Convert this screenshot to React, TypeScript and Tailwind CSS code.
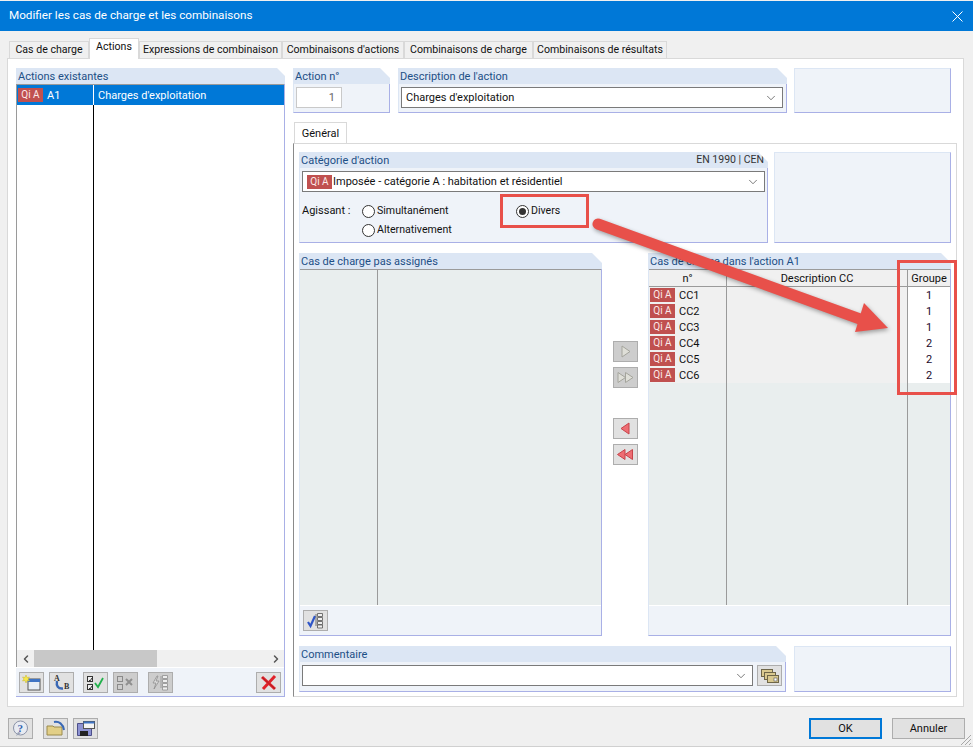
import { ChevronDown, ChevronLeft, ChevronRight } from "lucide-react";
import type { ReactNode } from "react";

const TABS = [
  { label: "Cas de charge", width: "w-[80px]" },
  { label: "Actions", width: "w-[50px]", active: true },
  { label: "Expressions de combinaison", width: "w-[143px]" },
  { label: "Combinaisons d'actions", width: "w-[122px]" },
  { label: "Combinaisons de charge", width: "w-[129px]" },
  { label: "Combinaisons de résultats", width: "w-[134px]" },
];

const ROWS = [
  { name: "CC1", group: 1 },
  { name: "CC2", group: 1 },
  { name: "CC3", group: 1 },
  { name: "CC4", group: 2 },
  { name: "CC5", group: 2 },
  { name: "CC6", group: 2 },
];

function Badge() {
  return (
    <span className="inline-flex h-[14px] w-[25px] shrink-0 items-center justify-center bg-[#c0504f] text-[10px] leading-none text-[#fbe9e9]">
      Qi A
    </span>
  );
}

function Group({
  title,
  right,
  className,
  children,
}: {
  title: string;
  right?: string;
  className: string;
  children?: ReactNode;
}) {
  return (
    <div className={`flex flex-col ${className}`}>
      <div className="flex h-[16px] shrink-0 items-center justify-between bg-[#dce6f4] px-[2px] text-[#1d4f86] [clip-path:polygon(0_0,calc(100%-10px)_0,100%_10px,100%_100%,0_100%)]">
        <span>{title}</span>
        {right && <span className="pr-[2px] text-[10.5px] text-[#333]">{right}</span>}
      </div>
      <div className="flex min-h-0 flex-1 flex-col border-r border-b border-l border-r-[#a9b0e6] border-b-[#a9b0e6] border-l-[#dce6f4] bg-[#eff3f9]">
        {children}
      </div>
    </div>
  );
}

function EmptyBox({ className }: { className: string }) {
  return (
    <div className={`border border-t-[#dce6f4] border-r-[#a9b0e6] border-b-[#a9b0e6] border-l-[#dce6f4] bg-[#eff3f9] ${className}`} />
  );
}

function ToolButton({ children, off, className = "" }: { children: ReactNode; off?: boolean; className?: string }) {
  return (
    <div
      className={`flex h-[21px] w-[25px] shrink-0 items-center justify-center border border-[#adadad] ${off ? "bg-[#cdcdcd]" : "bg-[#e1e1e1]"} ${className}`}
    >
      {children}
    </div>
  );
}

function Select({ className, children }: { className: string; children?: ReactNode }) {
  return (
    <div className={`flex h-[21px] items-center border border-[#7a7a7a] bg-white ${className}`}>
      <div className="flex min-w-0 flex-1 items-center pl-[4px]">{children}</div>
      <ChevronDown size={14} strokeWidth={1.2} className="mr-[4px] text-[#444]" />
    </div>
  );
}

function Radio({ label, checked }: { label: string; checked?: boolean }) {
  return (
    <div className="flex h-[14px] items-center gap-[2px] text-[10.6px]">
      <span className="flex h-[13px] w-[13px] items-center justify-center rounded-full border border-[#333] bg-white">
        {checked && <span className="h-[7px] w-[7px] rounded-full bg-[#333]" />}
      </span>
      <span>{label}</span>
    </div>
  );
}

function Svg({ children }: { children: ReactNode }) {
  return (
    <svg width="21" height="17" viewBox="0 0 21 17" fill="none">
      {children}
    </svg>
  );
}

function TriangleButtons({ dir, double, off }: { dir: "r" | "l"; double?: boolean; off?: boolean }) {
  const fill = off ? "#dfdfd8" : "#ee6d73";
  const stroke = off ? "#a4a49c" : "#c8444a";
  const points =
    dir === "r"
      ? double
        ? ["3,3.500 10.500,8.500 3,13.500", "10.500,3.500 18,8.500 10.500,13.500"]
        : ["7,3 15,8.500 7,14"]
      : double
        ? ["10,3.500 2.500,8.500 10,13.500", "17.500,3.500 10,8.500 17.500,13.500"]
        : ["14,3 6,8.500 14,14"];
  return (
    <ToolButton off={off}>
      <Svg>
        {points.map((p) => (
          <polygon key={p} points={p} fill={fill} stroke={stroke} />
        ))}
      </Svg>
    </ToolButton>
  );
}

function NewIcon() {
  return (
    <Svg>
      <rect x="7" y="5" width="12" height="11" fill="#e8eef6" stroke="#555" />
      <rect x="7" y="5" width="12" height="3" fill="#3f74c4" />
      <path d="M5 1l1 2.5 2.5-.5-1.5 2 1.5 2-2.5-.5-1 2.5-1-2.5-2.5.5 1.5-2-1.5-2 2.5.5z" fill="#f6e84a" stroke="#c9b52a" strokeWidth=".5" />
    </Svg>
  );
}

function RenameIcon() {
  return (
    <Svg>
      <text x="3" y="7" fontSize="8" fontWeight="700" fill="#333" fontFamily="Liberation Serif, serif">A</text>
      <text x="13" y="15" fontSize="8" fontWeight="700" fill="#333" fontFamily="Liberation Serif, serif">B</text>
      <path d="M6 7c-1 5 1 8 6 7.500" stroke="#3a68b5" strokeWidth="2.4" fill="none" />
    </Svg>
  );
}

function CheckAllIcon() {
  return (
    <Svg>
      <rect x="2.500" y="2.500" width="5" height="5" fill="#eee" stroke="#333" />
      <rect x="2.500" y="10.500" width="5" height="5" fill="#eee" stroke="#333" />
      <path d="M4 6l1 1 2-3M4 14l1 1 2-3" stroke="#333" />
      <path d="M10 9l3 4 5-9" stroke="#22b14c" strokeWidth="1.8" fill="none" />
    </Svg>
  );
}

function UncheckAllIcon() {
  return (
    <Svg>
      <rect x="2.500" y="2.500" width="5" height="5" stroke="#8a8a8a" />
      <rect x="2.500" y="10.500" width="5" height="5" stroke="#8a8a8a" />
      <path d="M11 5l6 6M17 5l-6 6" stroke="#8f8f8f" strokeWidth="2" />
    </Svg>
  );
}

function TreeIcon({ active }: { active?: boolean }) {
  const line = active ? "#555" : "#8f8f8f";
  return (
    <Svg>
      {active ? (
        <path d="M3 10l2.500 4L10 4" stroke="#2f56c8" strokeWidth="2.2" fill="none" />
      ) : (
        <path d="M7 2L3 9h3l-2 6 5-8H6l2-5z" stroke={line} fill="#dedede" strokeWidth=".8" />
      )}
      <path d="M12.500 1.500h5v3h-5zM12.500 5.500h5v3h-5zM12.500 9.500h5v3h-5zM12.500 13h5v3h-5z" stroke={line} strokeWidth=".8" fill="#eee" />
      <path d="M11 2v12" stroke={line} strokeWidth=".8" />
    </Svg>
  );
}

function DeleteIcon() {
  return (
    <Svg>
      <path d="M4 3l13 12M17 2L5 15" stroke="#e0222a" strokeWidth="3" />
      <path d="M4 3l13 12" stroke="#9e1d22" strokeWidth=".8" />
    </Svg>
  );
}

function HelpIcon() {
  return (
    <Svg>
      <circle cx="10.500" cy="8" r="7" fill="#e8ebf2" stroke="#8b93a8" />
      <path d="M6 16l2-4 3 1z" fill="#9aa2b6" />
      <text x="7.500" y="12" fontSize="11" fontWeight="700" fill="#2f5fae" fontFamily="Liberation Serif, serif">?</text>
    </Svg>
  );
}

function OpenIcon() {
  return (
    <Svg>
      <path d="M2 6h6l1 1h8v8H2z" fill="#e2cf87" stroke="#9a8a4c" />
      <path d="M9 2c5-1 9 2 10 8" stroke="#3a68b5" strokeWidth="2" fill="none" />
    </Svg>
  );
}

function SaveIcon() {
  return (
    <Svg>
      <path d="M2.500 3.500h14v12h-14z" fill="#8d92d2" stroke="#4d4f8a" />
      <rect x="8.500" y="1.500" width="11" height="7" fill="#f4f4f4" stroke="#555" />
      <rect x="8.500" y="1.500" width="11" height="2" fill="#3f74c4" />
      <rect x="5" y="11" width="8" height="5" fill="#222" />
    </Svg>
  );
}

function CopyIcon() {
  return (
    <Svg>
      <rect x="2.500" y="2.500" width="11" height="7" fill="#d9c98f" stroke="#6e6649" />
      <rect x="5.500" y="5.500" width="11" height="7" fill="#d9c98f" stroke="#6e6649" />
      <rect x="8.500" y="8.500" width="11" height="7" fill="#d9c98f" stroke="#6e6649" />
      <rect x="15" y="11" width="3" height="3" fill="#fff" stroke="#555" strokeWidth=".6" />
    </Svg>
  );
}

export default function App() {
  return (
    <div className="relative h-[747px] w-[973px] overflow-hidden bg-[#f0f0f0] font-['Roboto',sans-serif] text-[11px] leading-none text-[#111]">
      {/* title bar */}
      <div className="mt-[1px] flex h-[30px] items-center justify-between bg-[#0078d7] pr-[10px] pl-[9px] text-[11.7px] text-white">
        <span>Modifier les cas de charge et les combinaisons</span>
        <svg width="11" height="11" viewBox="0 0 11 11" stroke="white" strokeWidth="1">
          <path d="M0.5 0.5l10 10M10.5 0.5l-10 10" />
        </svg>
      </div>

      {/* top tabs */}
      <div className="relative z-10 mt-[7px] ml-[9px] flex h-[20px] items-end text-[10.6px]">
        {TABS.map((t) => (
          <div
            key={t.label}
            className={`flex items-center justify-center border-x border-t border-[#d9d9d9] whitespace-nowrap ${t.width} ${
              t.active ? "mb-[-1px] h-[21px] bg-white pb-[3px]" : "h-[17px] bg-[#f0f0f0]"
            }`}
          >
            {t.label}
          </div>
        ))}
      </div>

      {/* main panel */}
      <div className="ml-[7px] flex h-[649px] w-[957px] gap-[8px] border border-[#d9d9d9] bg-white pt-[9px] pl-[8px]">
        {/* left list */}
        <div className="flex h-[629px] w-[269px] flex-col">
          <div className="flex h-[16px] shrink-0 items-center bg-[#dce6f4] px-[2px] text-[#1d4f86] [clip-path:polygon(0_0,calc(100%-8px)_0,100%_8px,100%_100%,0_100%)]">
            Actions existantes
          </div>
          <div className="flex min-h-0 flex-1 flex-col border-r border-b border-r-[#a9b0e6] border-b-[#a9b0e6] bg-[#eff3f9]">
            <div className="flex min-h-0 flex-1 flex-col border-t border-l border-[#9a9a9a] bg-white">
              <div className="flex h-[20px] shrink-0 items-center bg-[#0078d7] text-white">
                <div className="flex h-full w-[77px] items-center gap-[4px] border-r border-white pl-[1px]">
                  <Badge />
                  <span>A1</span>
                </div>
                <span className="pl-[4px]">Charges d'exploitation</span>
              </div>
              <div className="min-h-0 flex-1">
                <div className="h-full w-[77px] border-r border-black" />
              </div>
            </div>
            <div className="flex h-[17px] shrink-0 items-center border-l border-[#9a9a9a] bg-[#f0f0f0]">
              <div className="flex w-[17px] justify-center">
                <ChevronLeft size={12} strokeWidth={3} className="text-[#555]" />
              </div>
              <div className="h-full w-[123px] bg-[#c8c8c8]" />
              <div className="flex-1" />
              <div className="flex w-[17px] justify-center">
                <ChevronRight size={12} strokeWidth={3} className="text-[#555]" />
              </div>
            </div>
            <div className="flex h-[29px] shrink-0 items-center border-t border-white pl-[3px]">
              <ToolButton><NewIcon /></ToolButton>
              <ToolButton className="ml-[5px]"><RenameIcon /></ToolButton>
              <ToolButton className="ml-[9px]"><CheckAllIcon /></ToolButton>
              <ToolButton off className="ml-[5px]"><UncheckAllIcon /></ToolButton>
              <ToolButton off className="ml-[10px]"><TreeIcon /></ToolButton>
              <ToolButton className="ml-[83px]"><DeleteIcon /></ToolButton>
            </div>
          </div>
        </div>

        {/* right side */}
        <div className="flex w-[664px] flex-col">
          <div className="flex h-[45px] shrink-0">
            <Group title="Action n°" className="w-[97px]">
              <div className="mt-[3px] ml-[2px] flex h-[21px] w-[46px] items-center justify-end border border-[#c9c9c9] bg-white pr-[6px] text-[#666]">
                1
              </div>
            </Group>
            <Group title="Description de l'action" className="ml-[8px] w-[389px]">
              <Select className="mt-[3px] ml-[2px] w-[382px]">Charges d'exploitation</Select>
            </Group>
            <EmptyBox className="ml-[7px] w-[157px]" />
          </div>

          <div className="mt-[9px] ml-[1px] flex h-[21px] w-[53px] shrink-0 items-center justify-center border-x border-t border-[#d9d9d9] bg-white">
            Général
          </div>

          <div className="flex h-[554px] flex-col border-t border-r border-b border-l border-t-[#d9d9d9] border-r-[#d9d9d9] border-b-[#d9d9d9] border-l-[#8a8a8a] pt-[8px] pl-[5px]">
            <div className="flex h-[91px] shrink-0 gap-[6px]">
              <Group title="Catégorie d'action" right="EN 1990 | CEN" className="w-[469px]">
                <Select className="mt-[3px] ml-[2px] h-[21px] w-[463px]">
                  <Badge />
                  <span className="ml-[1px]">Imposée - catégorie A : habitation et résidentiel</span>
                </Select>
                <div className="mt-[12px] ml-[2px] flex">
                  <span className="w-[60px] pt-[1px]">Agissant :</span>
                  <div className="flex w-[154px] flex-col gap-[5px]">
                    <Radio label="Simultanément" />
                    <Radio label="Alternativement" />
                  </div>
                  <Radio label="Divers" checked />
                </div>
              </Group>
              <EmptyBox className="w-[177px]" />
            </div>

            <div className="mt-[10px] flex h-[383px] shrink-0">
              <Group title="Cas de charge pas assignés" className="w-[303px]">
                <div className="flex min-h-0 flex-1 border-t border-[#9a9a9a] bg-[#e9eeee]">
                  <div className="w-[78px] border-r border-[#9a9a9a]" />
                </div>
                <div className="flex h-[30px] shrink-0 items-center border-t border-white pl-[3px]">
                  <ToolButton><TreeIcon active /></ToolButton>
                </div>
              </Group>

              <div className="flex w-[46px] shrink-0 flex-col items-center pt-[88px]">
                <TriangleButtons dir="r" off />
                <div className="mt-[5px]"><TriangleButtons dir="r" double off /></div>
                <div className="mt-[30px]"><TriangleButtons dir="l" /></div>
                <div className="mt-[5px]"><TriangleButtons dir="l" double /></div>
              </div>

              <Group title="Cas de charge dans l'action A1" className="w-[303px]">
                <div className="flex min-h-0 flex-1 border-t border-[#9a9a9a] bg-[#e9eeee]">
                  <div className="flex w-[78px] flex-col border-r border-[#9a9a9a]">
                    <div className="flex h-[17px] items-center justify-center border-b border-[#9a9a9a] bg-[#f0f0f0]">n°</div>
                    {ROWS.map((r) => (
                      <div key={r.name} className="flex h-[16px] items-center gap-[4px] bg-[#f0f0f0] pl-[1px]">
                        <Badge />
                        <span>{r.name}</span>
                      </div>
                    ))}
                  </div>
                  <div className="flex w-[181px] flex-col border-r border-[#9a9a9a]">
                    <div className="flex h-[17px] items-center justify-center border-b border-[#9a9a9a] bg-[#f0f0f0]">Description CC</div>
                    <div className="h-[96px] bg-[#f0f0f0]" />
                  </div>
                  <div className="flex flex-1 flex-col">
                    <div className="flex h-[17px] items-center justify-center border-b border-[#9a9a9a] bg-[#f0f0f0]">Groupe</div>
                    {ROWS.map((r) => (
                      <div key={r.name} className="flex h-[16px] items-center justify-center bg-white text-[#1a0a2a]">
                        {r.group}
                      </div>
                    ))}
                  </div>
                </div>
                <div className="h-[30px] shrink-0 border-t border-white" />
              </Group>
            </div>

            <div className="mt-[10px] flex h-[46px] shrink-0">
              <Group title="Commentaire" className="w-[487px]">
                <div className="mt-[3px] ml-[2px] flex items-center gap-[4px]">
                  <Select className="w-[451px]" />
                  <ToolButton><CopyIcon /></ToolButton>
                </div>
              </Group>
              <EmptyBox className="ml-[8px] w-[157px]" />
            </div>
          </div>
        </div>
      </div>

      {/* bottom bar */}
      <div className="flex items-center pt-[11px] pr-[8px] pl-[8px]">
        <ToolButton><HelpIcon /></ToolButton>
        <ToolButton className="ml-[10px]"><OpenIcon /></ToolButton>
        <ToolButton className="ml-[5px]"><SaveIcon /></ToolButton>
        <div className="ml-auto flex h-[21px] w-[73px] items-center justify-center border-2 border-[#0078d7] bg-[#e1e1e1]">OK</div>
        <div className="ml-[10px] flex h-[21px] w-[73px] items-center justify-center border border-[#adadad] bg-[#e1e1e1]">Annuler</div>
      </div>

      <svg className="absolute right-[1px] bottom-[1px]" width="12" height="12" viewBox="0 0 12 12" stroke="#a8a8a8">
        <path d="M11 1L1 11M11 5L5 11M11 9L9 11" />
      </svg>
      <div className="absolute right-0 bottom-0 left-0 h-[1px] bg-[#d0d0d0]" />

      {/* annotations */}
      <div className="absolute top-[194px] left-[500px] h-[34px] w-[89px] border-[3px] border-[#e8504a]" />
      <div className="absolute top-[260px] left-[897px] h-[135px] w-[60px] border-[3px] border-[#e8504a]" />
      <svg className="absolute top-0 left-0 drop-shadow-[1px_2px_2px_rgba(0,0,0,0.35)]" width="973" height="747" fill="none">
        <path d="M598 224L860 319" stroke="#e8504a" strokeWidth="11" strokeLinecap="round" />
        <polygon points="864,303 888,328 855,332" fill="#e8504a" />
      </svg>
    </div>
  );
}
